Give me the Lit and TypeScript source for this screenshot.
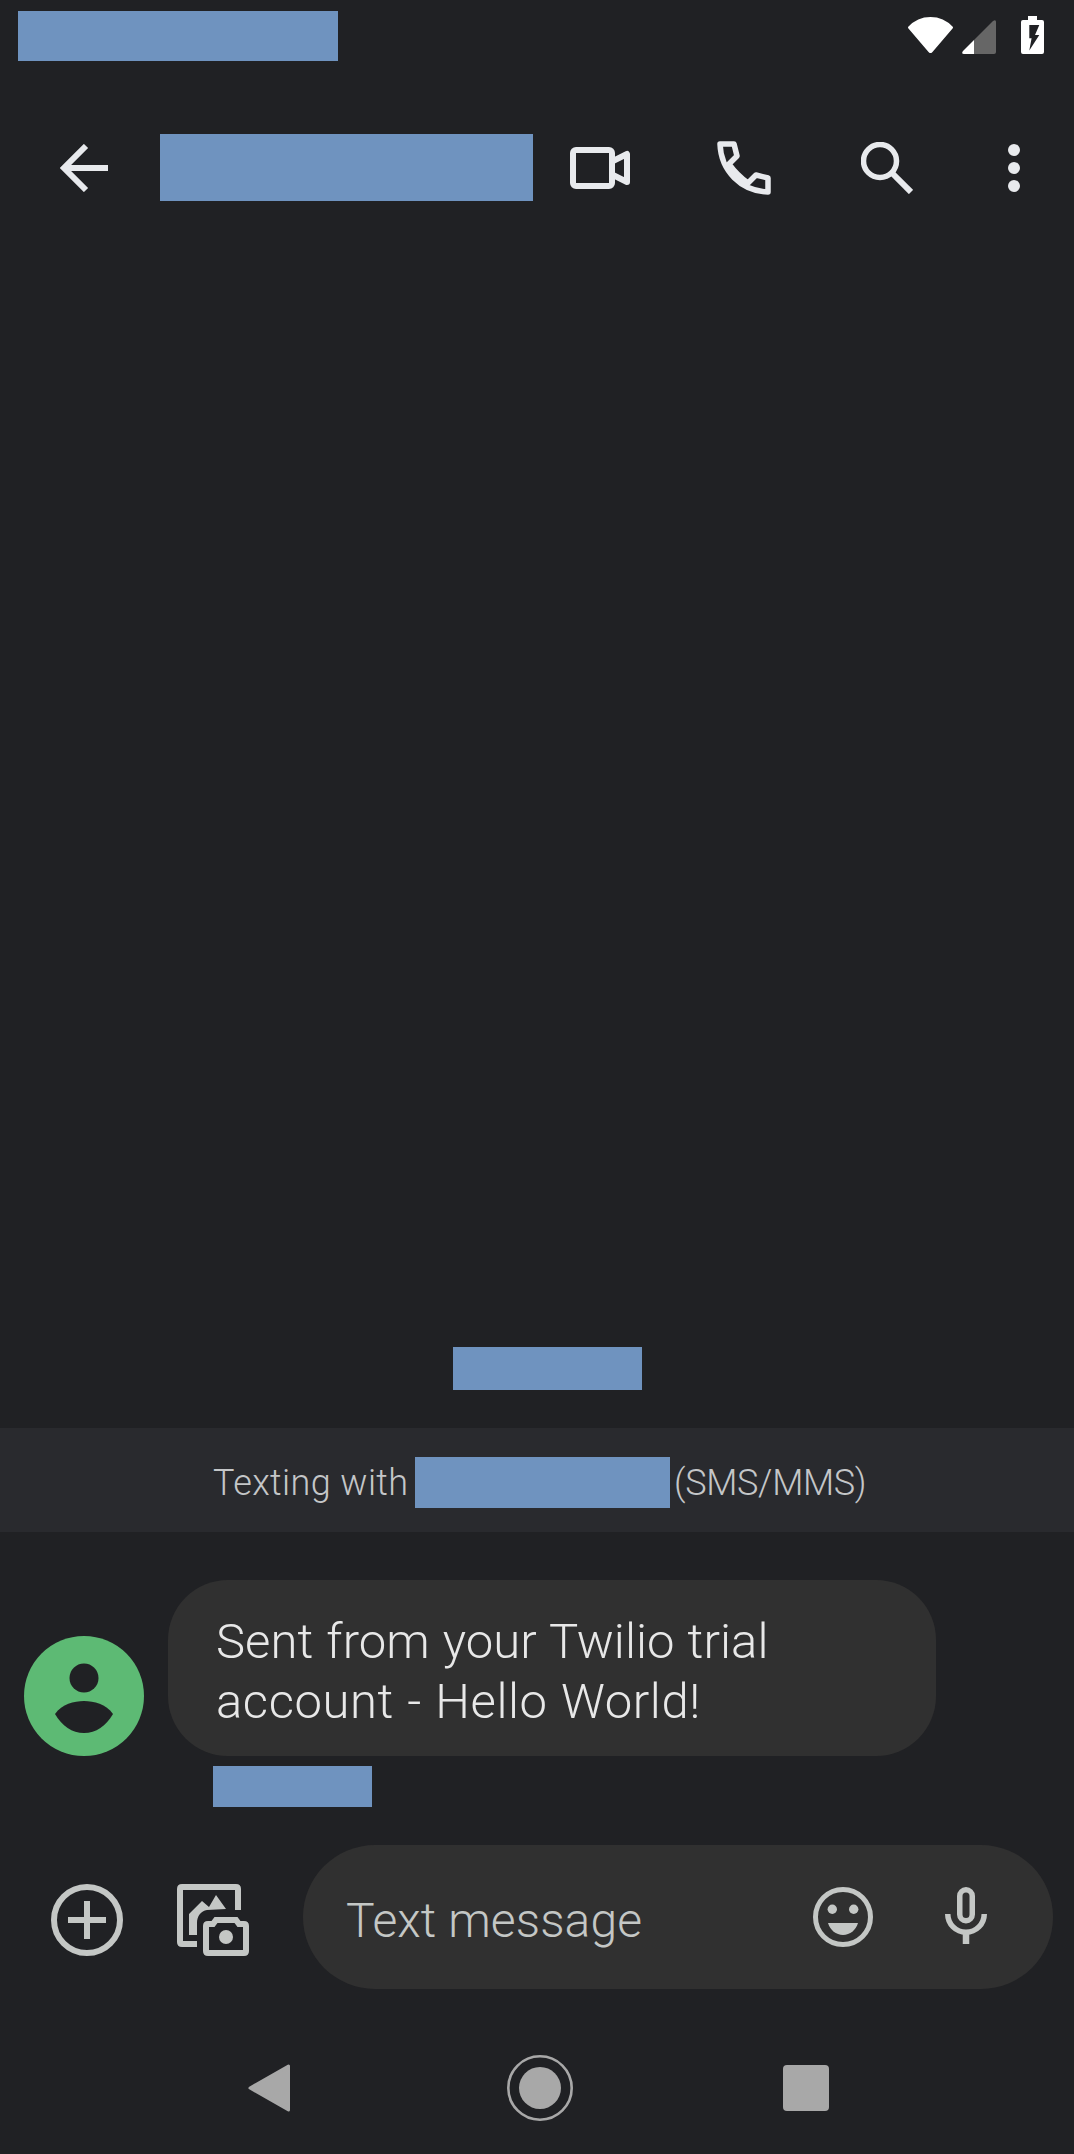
import { LitElement, html, css } from "lit";
import { customElement } from "lit/decorators.js";

@customElement("app-root")
export class AppRoot extends LitElement {
  static styles = css`
    :host {
      display: flex;
      flex-direction: column;
      width: 1074px;
      height: 2154px;
      background: #202124;
      font-family: Roboto, "Noto Sans", sans-serif;
      overflow: hidden;
    }

    svg {
      display: block;
      flex: none;
    }

    .redact {
      background: #6f93bf;
      flex: none;
    }

    /* status bar */
    .status {
      display: flex;
      height: 72px;
      flex: none;
      padding-right: 30px;
      box-sizing: border-box;
    }
    .status .redact {
      width: 320px;
      height: 50px;
      margin: 11px auto 0 18px;
    }
    .status svg {
      margin-top: 16px;
    }
    .wifi {
      margin-right: 8px;
    }
    .signal {
      margin-right: 25px;
    }

    /* toolbar */
    .toolbar {
      display: flex;
      align-items: center;
      height: 192px;
      flex: none;
      padding-left: 60px;
      box-sizing: border-box;
      color: #e8eaed;
    }
    .toolbar .redact {
      width: 373px;
      height: 67px;
      align-self: flex-start;
      margin: 62px 37px 0 52px;
    }
    .call {
      margin-left: 87px;
    }
    .search {
      margin-left: 90px;
    }
    .more {
      margin-left: 95px;
    }

    /* conversation */
    .thread {
      flex: 1;
      display: flex;
      flex-direction: column;
      justify-content: flex-end;
    }
    .date {
      width: 189px;
      height: 43px;
      margin: 0 0 38px 453px;
    }
    .banner {
      display: flex;
      align-items: center;
      height: 104px;
      padding: 5px 0 0 213px;
      box-sizing: border-box;
      background: #292a2e;
      color: #c4c6c8;
      font-size: 36px;
      font-weight: 300;
    }
    .banner .redact {
      width: 255px;
      height: 51px;
    }
    .banner .lead {
      width: 202px;
      white-space: nowrap;
      letter-spacing: 0.4px;
    }
    .banner .kind {
      margin-left: 4px;
      letter-spacing: -0.3px;
    }
    .message {
      display: flex;
      align-items: flex-end;
      gap: 24px;
      margin: 48px 0 0 24px;
    }
    .bubble {
      width: 768px;
      box-sizing: border-box;
      padding: 32px 48px 24px;
      border-radius: 60px;
      background: #303030;
      color: #e8e8e8;
      font-size: 49px;
      font-weight: 300;
      line-height: 60px;
      word-spacing: 1px;
      letter-spacing: 0.06px;
    }
    .bubble .second {
      letter-spacing: 0.55px;
    }
    .time {
      width: 159px;
      height: 41px;
      margin: 10px 0 38px 213px;
    }

    /* compose row */
    .compose {
      display: flex;
      align-items: flex-start;
      height: 144px;
      flex: none;
      padding-left: 51px;
      box-sizing: border-box;
      color: #c4c7c5;
    }
    .compose > svg {
      margin-top: 39px;
    }
    .gallery {
      margin-left: 54px;
    }
    .input {
      display: flex;
      align-items: center;
      width: 750px;
      height: 144px;
      margin-left: 54px;
      padding: 0 66px 0 43px;
      box-sizing: border-box;
      border-radius: 72px;
      background: #303030;
    }
    .input span {
      flex: 1;
      padding-top: 6px;
      font-size: 48px;
      font-weight: 300;
      letter-spacing: 0.1px;
    }
    .mic {
      margin-left: 72px;
    }

    /* navigation bar */
    .nav {
      display: flex;
      align-items: center;
      height: 165px;
      flex: none;
      padding: 66px 0 33px 248px;
      box-sizing: border-box;
      color: #a8a8a8;
    }
    .nav svg:nth-child(2) {
      margin-left: 217px;
    }
    .nav svg:nth-child(3) {
      margin-left: 210px;
    }
  `;

  render() {
    return html`
      <div class="status">
        <div class="redact"></div>
        <svg class="wifi" width="47" height="40" viewBox="0 -1 47 40" fill="#fff">
          <path d="M2 10.5A29 29 0 0 1 45 10.5L24.5 34.5Q23.5 35.5 22.5 34.5Z" stroke="#fff" stroke-width="2" stroke-linejoin="round" />
        </svg>
        <svg class="signal" width="34" height="40" viewBox="0 -4 34 40">
          <path d="M12 20L31 1Q34-1 34 2V32Q34 34 32 34H12Z" fill="#666" />
          <path d="M12 20V34H2Q-1 34 1 31Z" fill="#fff" />
        </svg>
        <svg width="23" height="40" viewBox="0 0 23 40">
          <path d="M7 0H16V4H21Q23 4 23 6V36Q23 38 21 38H2Q0 38 0 36V6Q0 4 2 4H7Z" fill="#fff" />
          <path d="M8.3 9H18.3L14 19H18.3L8.3 34.5L10.6 22.3H8.3Z" fill="#202124" />
        </svg>
      </div>

      <div class="toolbar">
        <svg width="48" height="48" viewBox="0 0 48 48" fill="none" stroke="currentColor" stroke-width="6">
          <path d="M48 24H4M26 2L4 24L26 46" />
        </svg>
        <div class="redact"></div>
        <svg width="60" height="42" viewBox="0 0 60 42" fill="none" stroke="currentColor" stroke-width="6" stroke-linejoin="round">
          <rect x="3" y="3" width="39" height="36" rx="3" />
          <path d="M43 14L57 7V35L43 28" />
        </svg>
        <svg class="call" width="54" height="54" viewBox="0 0 54 54" fill="none" stroke="currentColor" stroke-width="5.5" stroke-linejoin="round">
          <path d="M3 3H17L20 15L12 23Q20 34 31 42L39 34L51 37V51C24 50 4 30 3 3Z" />
        </svg>
        <svg class="search" width="52" height="52" viewBox="0 0 52 52" fill="none" stroke="currentColor" stroke-width="5.5">
          <circle cx="19" cy="19" r="16.5" />
          <path d="M31 31L50 50" stroke-width="6" />
        </svg>
        <svg class="more" width="12" height="48" viewBox="0 0 12 48" fill="currentColor">
          <circle cx="6" cy="6" r="6" />
          <circle cx="6" cy="24" r="6" />
          <circle cx="6" cy="42" r="6" />
        </svg>
      </div>

      <div class="thread">
        <div class="redact date"></div>
        <div class="banner">
          <span class="lead">Texting with</span>
          <div class="redact"></div>
          <span class="kind">(SMS/MMS)</span>
        </div>
        <div class="message">
          <svg width="120" height="120" viewBox="0 0 120 120">
            <circle cx="60" cy="60" r="60" fill="#5dba74" />
            <circle cx="60" cy="42" r="14.5" fill="#202124" />
            <path d="M31 78C38 68 50 65 60 65C70 65 82 68 89 78C82 90 72 97 60 97C48 97 38 90 31 78Z" fill="#202124" />
          </svg>
          <div class="bubble">Sent from your Twilio trial<br /><span class="second">account - Hello World!</span></div>
        </div>
        <div class="redact time"></div>
      </div>

      <div class="compose">
        <svg width="72" height="72" viewBox="0 0 72 72" fill="none" stroke="currentColor">
          <circle cx="36" cy="36" r="33" stroke-width="6" />
          <path d="M17 36H55M36 17V55" stroke-width="6" />
        </svg>
        <svg class="gallery" width="72" height="72" viewBox="0 0 72 72" fill="none" stroke="currentColor" stroke-width="6">
          <path d="M20 60H5Q3 60 3 58V5Q3 3 5 3H59Q61 3 61 5V26" />
          <path d="M12 51V30L25 17L32 23L39 11L49 25L30 26C24 27 20 32 20 39V51Z" fill="currentColor" stroke="none" />
          <path d="M29 42Q29 40 31 40H36L39 36H59L62 40H67Q69 40 69 42V67Q69 69 67 69H31Q29 69 29 67Z" />
          <circle cx="49" cy="53" r="7" fill="currentColor" stroke="none" />
        </svg>
        <div class="input">
          <span>Text message</span>
          <svg width="60" height="60" viewBox="0 0 60 60" fill="currentColor">
            <circle cx="30" cy="30" r="27.5" fill="none" stroke="currentColor" stroke-width="5" />
            <circle cx="19.3" cy="22.3" r="4.7" />
            <circle cx="40.7" cy="22.3" r="4.7" />
            <path d="M15 36H45C43 43 37 48 30 48C23 48 17 43 15 36Z" />
          </svg>
          <svg class="mic" width="42" height="60" viewBox="0 0 42 60" fill="none" stroke="currentColor" stroke-width="5.5">
            <rect x="14.75" y="2.75" width="12.5" height="31" rx="6.25" />
            <path d="M2.75 27A18.25 18.25 0 0 0 39.25 27" />
            <path d="M21 44V57" stroke-width="6.5" />
          </svg>
        </div>
      </div>

      <div class="nav">
        <svg width="42" height="48" viewBox="0 0 42 48" fill="currentColor" stroke="currentColor" stroke-width="3" stroke-linejoin="round">
          <path d="M2 24L40.5 2V46Z" />
        </svg>
        <svg width="66" height="66" viewBox="0 0 66 66" fill="currentColor">
          <circle cx="33" cy="33" r="31.7" fill="none" stroke="currentColor" stroke-width="2.6" />
          <circle cx="33" cy="33" r="21" />
        </svg>
        <svg width="46" height="46" viewBox="0 0 46 46" fill="currentColor">
          <rect width="46" height="46" rx="4" />
        </svg>
      </div>
    `;
  }
}
